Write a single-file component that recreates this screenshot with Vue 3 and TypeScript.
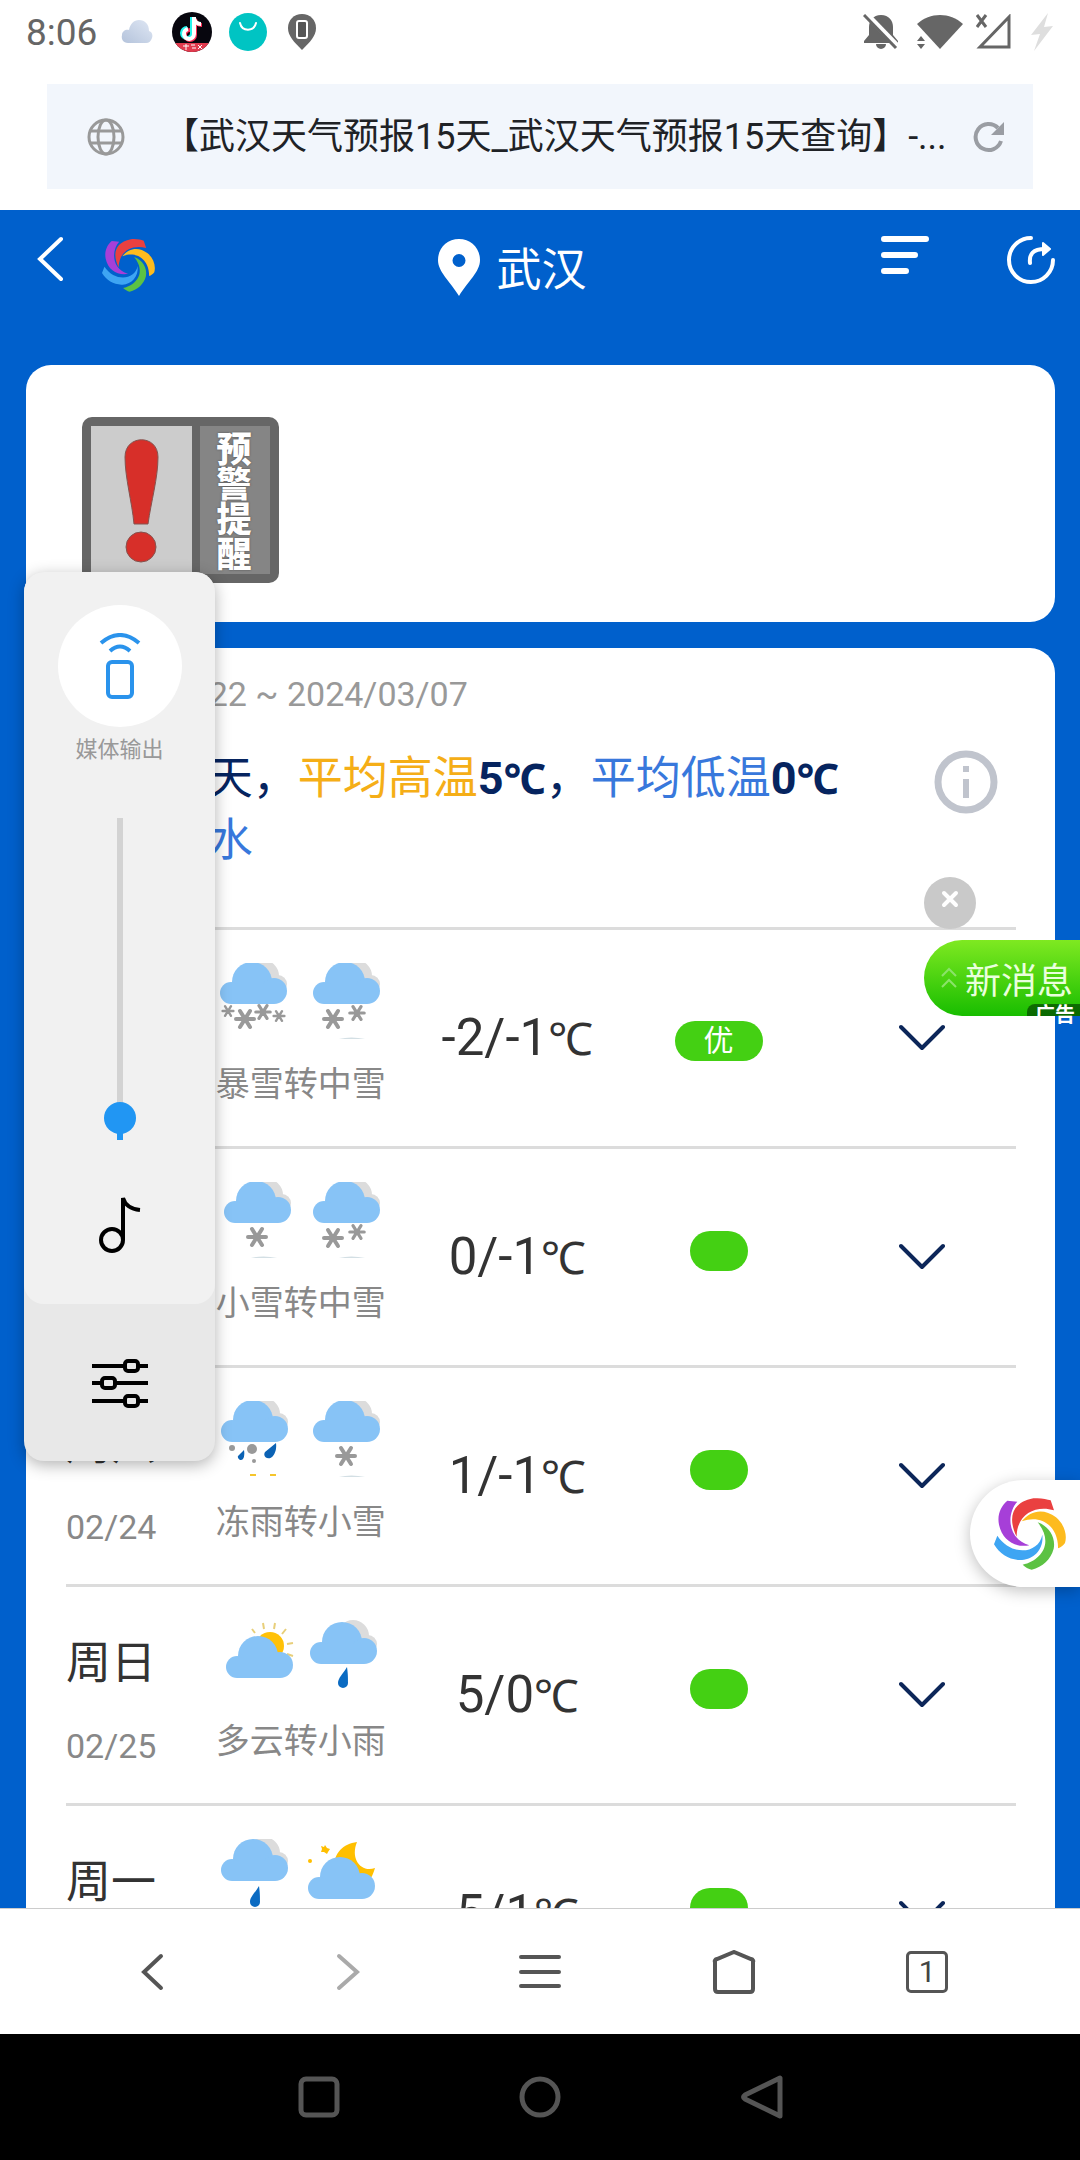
<script setup lang="ts">
import { ref } from 'vue'

type Snow = [x: number, y: number, size: number]

interface WeatherIcon {
  kind: 'snow' | 'sleet' | 'rain' | 'cloudySun' | 'cloudyMoon'
  x: number
  y: number
  snow?: Snow[]
}

interface Day {
  week: string
  date: string
  icons: WeatherIcon[]
  text: string
  temp: string
  air: string
}

const lightSnow = (x: number, sx: number): WeatherIcon => ({ kind: 'snow', x, y: -1, snow: [[sx, 55, 10]] })
const midSnow: WeatherIcon = { kind: 'snow', x: 10, y: -1, snow: [[30, 56, 10], [54, 50, 8]] }

const days: Day[] = [
  {
    week: '周四', date: '02/22', text: '暴雪转中雪', temp: '-2/-1', air: '优',
    icons: [
      { kind: 'snow', x: 5, y: -1, snow: [[13, 48, 6], [30, 56, 10], [48, 49, 8], [64, 53, 6]] },
      midSnow,
    ],
  },
  { week: '周五', date: '02/23', text: '小雪转中雪', temp: '0/-1', air: '', icons: [lightSnow(9, 42), midSnow] },
  {
    week: '周六', date: '02/24', text: '冻雨转小雪', temp: '1/-1', air: '',
    icons: [{ kind: 'sleet', x: 6, y: -1 }, lightSnow(10, 43)],
  },
  {
    week: '周日', date: '02/25', text: '多云转小雨', temp: '5/0', air: '',
    icons: [{ kind: 'cloudySun', x: 11, y: 16 }, { kind: 'rain', x: 7, y: 2 }],
  },
  {
    week: '周一', date: '02/26', text: '小雨转多云', temp: '5/1', air: '',
    icons: [{ kind: 'rain', x: 6, y: 0 }, { kind: 'cloudyMoon', x: 5, y: 18 }],
  },
]

const volume = ref(2)
const address = ref('【武汉天气预报15天_武汉天气预报15天查询】-...')
</script>

<template>
  <div class="screen">
    <svg class="defs" width="0" height="0" aria-hidden="true">
      <symbol id="swirl" viewBox="0 0 216 216">
        <path fill="#a63fd8" d="M40 8L70 11C38 45 38 122 106 142C66 150 25 128 15 80C9 52 20 24 40 8Z" />
        <path fill="#ea4040" d="M68 116C42 64 50 14 118 1C140 -1 158 3 170 7L180 37C126 20 68 48 68 116Z" />
        <path fill="#fdbb1e" d="M83 70C110 36 150 30 186 58C212 80 220 112 213 135C208 142 200 148 192 151C194 92 148 46 83 70Z" />
        <path fill="#5cc243" d="M131 73C164 84 186 118 179 152C170 185 146 206 113 215C103 213 94 207 86 200C140 188 182 136 131 73Z" />
        <path fill="#3ea5f3" d="M10 113L0 139C18 170 50 188 84 186C120 184 150 154 145 110C134 168 52 176 10 113Z" />
      </symbol>
      <symbol id="cloud" viewBox="0 0 67 46" overflow="visible">
        <g fill="#dcdcdc">
          <circle cx="43" cy="14" r="16" />
          <circle cx="58" cy="22" r="9" />
        </g>
      </symbol>
      <symbol id="cloud-front" viewBox="0 0 67 46" overflow="visible">
        <g fill="#87c3f6">
          <circle cx="32" cy="20" r="20" />
          <circle cx="11" cy="31" r="11" />
          <circle cx="54" cy="29" r="13" />
          <rect x="11" y="22" width="43" height="20" />
        </g>
      </symbol>
      <symbol id="flake" viewBox="-10 -10 20 20" overflow="visible">
        <path d="M-9 0H9M-5 -8L5 8M5 -8L-5 8" fill="none" stroke="#999" stroke-width="4" stroke-linecap="round" />
      </symbol>
    </svg>

    <header class="status">
      <time>8:06</time>
      <svg class="s-cloud" viewBox="0 0 32 24" width="32" height="24">
        <defs>
          <linearGradient id="cloudTone" x1="1" y1="0" x2="0" y2="1">
            <stop offset="0" stop-color="#dfe7f4" />
            <stop offset="1" stop-color="#b4c3db" />
          </linearGradient>
        </defs>
        <path fill="url(#cloudTone)" d="M7 23C2 23 0 19 1 15C1 11 5 9 8 10C9 4 13 0 18 0C24 0 28 4 28 11C31 12 32 15 31 18C30 21 28 23 25 23Z" />
      </svg>
      <svg viewBox="0 0 40 40" width="40" height="40">
        <defs><clipPath id="round"><circle cx="20" cy="20" r="20" /></clipPath></defs>
        <g clip-path="url(#round)">
          <rect width="40" height="40" fill="#07060e" />
          <rect y="31" width="40" height="9" fill="#e23a4e" />
          <g fill="none" stroke-width="4">
            <path stroke="#25f4ee" d="M20 5V21A5 5 0 1 1 15 16M20 6Q22 12 28 12" />
            <path stroke="#fe2c55" d="M23 7V23A5 5 0 1 1 18 18M23 7Q24 13 30 13" />
            <path stroke="#fff" d="M22 5V22A5 5 0 1 1 16 17M22 6Q23 12 29 12" />
          </g>
          <path d="M11 34H17M14 32V38M19 33H23M20 36H24M26 33L30 37M30 33L26 37" stroke="#fff" stroke-width="1" />
        </g>
      </svg>
      <svg viewBox="0 0 40 40" width="40" height="40">
        <circle cx="20" cy="20" r="19" fill="#00c4c3" />
        <path d="M12 11C14 20 26 20 28 11" fill="none" stroke="#fff" stroke-width="2" stroke-linecap="round" />
      </svg>
      <svg viewBox="0 0 28 36" width="28" height="36">
        <path fill="#666" d="M14 0C6 0 0 6 0 14C0 22 6 28 14 36C22 28 28 22 28 14C28 6 22 0 14 0Z" />
        <rect x="9" y="7" width="10" height="17" rx="2" fill="#555" stroke="#fff" stroke-width="2" />
      </svg>
      <div class="status-right">
        <svg viewBox="0 0 36 36" width="36" height="36">
          <path fill="#666" d="M18 1C10 1 6 7 6 13V21L1 27V29H35V27L30 21V13C30 7 26 1 18 1ZM13 30H23A5 5 0 0 1 13 30Z" />
          <path d="M3 0L35 33" stroke="#fff" stroke-width="6" />
          <path d="M1 1L33 34" stroke="#666" stroke-width="3" />
        </svg>
        <div class="signals">
          <svg viewBox="0 0 46 36" width="46" height="36">
            <path fill="#666" d="M23 35L0 10C13 -2 33 -2 46 10Z" />
            <path fill="#fff" d="M0 20H7L15 36H0Z" />
            <path fill="#666" d="M0 27L4 22L8 27ZM0 30H8L4 35Z" />
          </svg>
          <svg viewBox="0 0 36 36" width="36" height="36">
            <path d="M33 3V33H4Z" fill="none" stroke="#666" stroke-width="3" />
            <path d="M1 1L10 13M10 1L1 13" stroke="#666" stroke-width="3" />
          </svg>
        </div>
        <svg viewBox="0 0 24 38" width="24" height="38">
          <path d="M18 0L1 22L10 21L4 38L23 13L14 14Z" fill="#dedede" />
        </svg>
      </div>
    </header>

    <form class="address" @submit.prevent>
      <svg viewBox="0 0 38 38" width="38" height="38" fill="none" stroke="#999" stroke-width="3">
        <circle cx="19" cy="19" r="17" />
        <ellipse cx="19" cy="19" rx="8" ry="17" />
        <path d="M3 13H35M3 25H35" />
      </svg>
      <input v-model="address" type="text" aria-label="网址" readonly />
      <button type="submit" aria-label="刷新">
        <svg viewBox="0 0 32 32" width="32" height="32">
          <path d="M28 20A13 13 0 1 1 25 7" fill="none" stroke="#9a9da3" stroke-width="4" />
          <path d="M31 1V14H18Z" fill="#9a9da3" />
        </svg>
      </button>
    </form>

    <main class="page">
      <div class="bar">
        <div class="bar-left">
          <button type="button" aria-label="返回">
            <svg viewBox="0 0 28 46" width="28" height="46">
              <path d="M25 3L4 23L25 43" fill="none" stroke="#fff" stroke-width="4" stroke-linecap="round" />
            </svg>
          </button>
          <a href="#" aria-label="首页"><svg width="53" height="53"><use href="#swirl" /></svg></a>
        </div>
        <h1>
          <svg viewBox="0 0 42 57" width="42" height="57">
            <path fill="#fff" fill-rule="evenodd" d="M21 0C9 0 0 9 0 21C0 33 12 42 21 57C30 42 42 33 42 21C42 9 33 0 21 0ZM21 15A6 6 0 1 1 21 28A6 6 0 1 1 21 15Z" />
          </svg>
          <span>武汉</span>
        </h1>
        <div class="bar-right">
          <button type="button" aria-label="菜单">
            <svg viewBox="0 0 48 48" width="48" height="48">
              <path d="M3 3H45M3 19H34M3 35H25" stroke="#fff" stroke-width="6" stroke-linecap="round" />
            </svg>
          </button>
          <button type="button" aria-label="分享">
            <svg viewBox="0 0 48 48" width="48" height="48">
              <g fill="none" stroke="#fff" stroke-width="4" stroke-linecap="round">
                <path d="M24 2A22 22 0 1 0 46 24" />
                <path d="M23 27C22 18 26 13 38 13" />
              </g>
              <path d="M36 7L43 13L36 19Z" fill="#fff" stroke="#fff" stroke-width="2" stroke-linejoin="round" />
            </svg>
          </button>
        </div>
      </div>

      <section class="card alert">
        <div class="sign">
          <svg viewBox="0 0 101 148" width="101" height="148">
            <rect width="101" height="148" fill="#ccc" />
            <g fill="#d72f29" stroke="#85534f" stroke-width="1">
              <path d="M34 31C34 8 67 8 67 31C67 52 60 76 57 98H43C41 76 34 52 34 31Z" />
              <circle cx="50" cy="121" r="15" />
            </g>
          </svg>
          <strong>预警提醒</strong>
        </div>
      </section>

      <section class="card forecast">
        <p class="range">2024/02/22 ~ 2024/03/07</p>
        <div class="summary">
          <p>
            未来<b>15</b>天，<span class="high">平均高温</span><b>5<i class="unit">℃</i></b>，<span class="low">平均低温</span><b>0<i class="unit">℃</i></b><br />
            <b>10</b><span class="low">天降水</span>
          </p>
          <button type="button" aria-label="说明">
            <svg viewBox="0 0 64 64" width="64" height="64">
              <circle cx="32" cy="32" r="28" fill="none" stroke="#c0c4cd" stroke-width="7" />
              <path d="M32 16V22M32 29V48" stroke="#c0c4cd" stroke-width="6" />
            </svg>
          </button>
        </div>

        <table>
          <colgroup>
            <col class="c-date" /><col class="c-weather" /><col class="c-temp" /><col class="c-air" /><col />
          </colgroup>
          <tbody>
            <tr v-for="day in days" :key="day.date">
              <th scope="row">
                <span class="week">{{ day.week }}</span>
                <span class="date">{{ day.date }}</span>
              </th>
              <td class="weather">
                <div class="icons">
                  <svg v-for="(icon, i) in day.icons" :key="i" viewBox="0 0 80 76" width="80" height="76">
                    <use v-if="icon.kind !== 'cloudySun' && icon.kind !== 'cloudyMoon'" href="#cloud" :x="icon.x" :y="icon.y" width="67" height="46" />
                    <g v-if="icon.kind === 'cloudySun'">
                      <circle cx="55" cy="26" r="14" fill="#ffc107" />
                      <path d="M40 13L37 9M49 9L48 3M59 9L60 3M67 14L71 9M72 24L78 23M72 34L78 36" stroke="#e8cf7a" stroke-width="2" />
                    </g>
                    <g v-if="icon.kind === 'cloudyMoon'" fill="#ffbf00">
                      <path d="M54 3C40 5 31 14 31 28L62 46C67 42 70 36 72 29C58 34 47 20 54 3Z" />
                      <path d="M22 6L24 9L27 10L25 13L24 15L21 13L18 13L19 10L18 7L21 8Z" />
                      <circle cx="7" cy="22" r="2" />
                    </g>
                    <use href="#cloud-front" :x="icon.x" :y="icon.y" width="67" height="46" />
                    <use v-for="f in icon.snow" :key="f[0]" href="#flake" :x="f[0] - f[2]" :y="f[1] - f[2]" :width="f[2] * 2" :height="f[2] * 2" />
                    <path v-if="icon.snow && icon.snow.length < 4" d="M36 77Q48 74 62 77" fill="none" stroke="#d3dfe4" stroke-width="2" />
                    <path v-if="icon.kind === 'rain'" d="M44 47C40 54 35 58 35 63A5 5 0 0 0 45 63C45 58 45 54 44 47Z" fill="#0b6bc2" />
                    <g v-if="icon.kind === 'sleet'">
                      <g fill="#999">
                        <circle cx="17" cy="47" r="3" />
                        <circle cx="37" cy="48" r="5" />
                        <circle cx="39" cy="60" r="2" />
                      </g>
                      <path d="M29 49L23 55A3 3 0 0 0 28 58Q30 55 29 49ZM61 42L50 51C47 56 54 60 58 55Q62 50 61 42Z" fill="#0b62b4" />
                      <path d="M35 74H41M55 74H61" stroke="#f5c52c" stroke-width="2" />
                    </g>
                  </svg>
                </div>
                <span class="desc">{{ day.text }}</span>
              </td>
              <td class="temp">{{ day.temp }}<i class="unit">℃</i></td>
              <td class="air"><span>{{ day.air }}</span></td>
              <td class="more">
                <button type="button" :aria-label="day.week + '详情'">
                  <svg viewBox="0 0 46 28" width="46" height="28">
                    <path d="M2 3L23 24L44 3" fill="none" stroke="#0c2659" stroke-width="4" stroke-linecap="round" stroke-linejoin="round" />
                  </svg>
                </button>
              </td>
            </tr>
          </tbody>
        </table>
      </section>
    </main>

    <nav class="tools">
      <button type="button" aria-label="后退">
        <svg viewBox="0 0 44 44" width="44" height="44" class="line"><path d="M30 6L13 22L30 38" /></svg>
      </button>
      <button type="button" aria-label="前进">
        <svg viewBox="0 0 44 44" width="44" height="44" class="line pale"><path d="M15 6L33 22L15 38" /></svg>
      </button>
      <button type="button" aria-label="菜单">
        <svg viewBox="0 0 44 44" width="44" height="44" class="line"><path d="M3 7H41M3 22H41M3 36H41" /></svg>
      </button>
      <button type="button" aria-label="主页">
        <svg viewBox="0 0 44 44" width="44" height="44" class="line"><path d="M3 12Q2 10 5 9L22 2L39 9Q42 10 41 12V39Q41 42 38 42H6Q3 42 3 39Z" /></svg>
      </button>
      <button type="button" class="tabs" aria-label="标签页"><span>1</span></button>
    </nav>

    <nav class="system">
      <button type="button" aria-label="最近">
        <svg viewBox="0 0 44 44" width="44" height="44"><rect x="4" y="4" width="36" height="36" rx="5" /></svg>
      </button>
      <button type="button" aria-label="桌面">
        <svg viewBox="0 0 44 44" width="44" height="44"><circle cx="22" cy="22" r="18" /></svg>
      </button>
      <button type="button" aria-label="返回上级">
        <svg viewBox="0 0 44 44" width="44" height="44"><path d="M41 3V41L6 24Q3 22 6 20Z" /></svg>
      </button>
    </nav>

    <aside class="volume">
      <div class="volume-main">
        <button type="button" class="output">
          <span class="disc">
            <svg viewBox="0 0 42 66" width="42" height="66" fill="none" stroke="#2a93ec" stroke-width="4">
              <path d="M2 10Q21 -6 40 10M11 18Q21 9 31 18" />
              <rect x="9" y="29" width="24" height="35" rx="4" />
            </svg>
          </span>
          媒体输出
        </button>
        <input v-model.number="volume" type="range" min="0" max="100" aria-label="媒体音量" />
        <svg class="note" viewBox="0 0 42 58" width="42" height="58" fill="none" stroke="#000" stroke-width="4">
          <circle cx="13" cy="44" r="11" />
          <path d="M24 44V2C26 9 31 13 41 14" />
        </svg>
      </div>
      <button type="button" class="tune" aria-label="声音设置">
        <svg viewBox="0 0 56 50" width="56" height="50" fill="none" stroke="#000" stroke-width="4">
          <path d="M0 8H32M47 8H56M0 25H9M25 25H56M0 43H32M47 43H56" />
          <rect x="33" y="3" width="13" height="10" rx="3" />
          <rect x="10" y="20" width="13" height="10" rx="3" />
          <rect x="33" y="38" width="13" height="10" rx="3" />
        </svg>
      </button>
    </aside>

    <button type="button" class="close" aria-label="关闭广告">
      <svg viewBox="0 0 20 20" width="20" height="20"><path d="M4 4L16 16M16 4L4 16" stroke="#fff" stroke-width="4" stroke-linecap="round" /></svg>
    </button>
    <a href="#" class="message">
      <svg viewBox="0 0 16 22" width="16" height="22" fill="none" stroke="#8be36a" stroke-width="2">
        <path d="M1 9L8 2L15 9M1 20L8 13L15 20" />
      </svg>
      新消息
      <small>广告</small>
    </a>
    <a href="#" class="float-logo" aria-label="快捷入口"><svg width="72" height="72"><use href="#swirl" /></svg></a>
  </div>
</template>

<style>
body {
  margin: 0;
}
</style>

<style scoped>
.screen {
  position: relative;
  display: flex;
  flex-direction: column;
  height: 100vh;
  overflow: hidden;
  background: #fff;
  color: #333;
  font-family: Roboto, "Noto Sans CJK SC", sans-serif;
}

svg {
  display: block;
  flex: none;
}

.defs {
  position: absolute;
}

button {
  padding: 0;
  border: 0;
  background: none;
  color: inherit;
  font: inherit;
}

a {
  color: inherit;
  text-decoration: none;
}

p,
h1 {
  margin: 0;
}

.status {
  display: flex;
  align-items: center;
  gap: 16px;
  height: 64px;
  padding: 0 26px;
  box-sizing: border-box;
}

.status time {
  color: #666;
  font-size: 37px;
}

.s-cloud {
  margin: 0 3px 0 8px;
}

.status svg:nth-of-type(4) {
  margin-left: 4px;
}

.status-right {
  display: flex;
  align-items: center;
  gap: 18px;
  margin-left: auto;
}

.signals {
  display: flex;
  gap: 13px;
}

.address {
  display: flex;
  align-items: center;
  height: 105px;
  margin: 20px 47px 21px;
  padding: 0 28px 0 40px;
  box-sizing: border-box;
  background: #f2f6fc;
}

.address input {
  flex: 1;
  min-width: 0;
  margin: 0 24px 0 38px;
  padding: 0;
  border: 0;
  background: none;
  color: #202226;
  font: 36px/52px Roboto, "Noto Sans CJK SC", sans-serif;
}

.page {
  flex: 1;
  min-height: 0;
  overflow: hidden;
  padding: 0 25px 0 26px;
  background: #0060cc;
}

.bar {
  display: grid;
  grid-template-columns: 6fr auto 7fr;
  align-items: start;
  height: 155px;
  padding: 26px 0 0 10px;
  box-sizing: border-box;
}

.bar-left {
  display: flex;
  align-items: flex-start;
  gap: 38px;
}

.bar-left a {
  padding-top: 3px;
}

.bar h1 {
  display: flex;
  align-items: flex-start;
  gap: 17px;
  padding-top: 3px;
  color: #fff;
  font-size: 45px;
  font-weight: 400;
  line-height: 57px;
}

.bar h1 span {
  padding-top: 3px;
}

.bar-right {
  display: flex;
  justify-content: flex-end;
  gap: 78px;
}

.card {
  border-radius: 25px;
  background: #fff;
}

.alert {
  height: 257px;
  margin-bottom: 26px;
  padding: 52px 56px;
  box-sizing: border-box;
}

.sign {
  display: flex;
  gap: 8px;
  width: max-content;
  padding: 9px;
  border-radius: 10px;
  background: #666;
}

.sign strong {
  width: 36px;
  padding: 7px 18px 1px 16px;
  background: #858585;
  color: #fff;
  font-size: 35px;
  font-weight: 900;
  line-height: 35px;
  text-align: center;
  text-shadow: 0 0 2px #444;
  word-break: break-all;
}

.forecast {
  padding: 26px 39px 0 40px;
}

.range {
  color: #999;
  font-size: 34px;
  line-height: 40px;
}

.summary {
  display: flex;
  justify-content: space-between;
  align-items: flex-start;
  height: 213px;
  padding: 32px 18px 0 0;
  box-sizing: border-box;
}

.summary p {
  padding-top: 1px;
  color: #06245f;
  font-size: 45px;
  line-height: 62px;
}

.summary button {
  margin-top: 4px;
}

.summary b {
  font-weight: 700;
}

.unit {
  font-family: "Noto Sans", "Noto Sans CJK SC", sans-serif;
  font-style: normal;
}

.summary .unit {
  font-size: 42px;
}

.high {
  color: #f5ae17;
}

.low {
  color: #3878dc;
}

table {
  width: 100%;
  border-collapse: collapse;
  table-layout: fixed;
}

.c-date {
  width: 14%;
}

.c-weather {
  width: 21%;
}

.c-temp {
  width: 25%;
}

.c-air {
  width: 18%;
}

tr {
  height: 219px;
  border-top: 3px solid #dcdcdc;
}

th,
td {
  padding: 0;
  font-weight: 400;
  text-align: center;
  vertical-align: top;
}

th {
  text-align: left;
}

.week {
  display: block;
  padding-top: 47px;
  font-size: 45px;
  line-height: 60px;
}

.date {
  display: block;
  padding-top: 32px;
  color: #888;
  font-size: 34px;
  line-height: 40px;
}

.icons {
  display: flex;
  justify-content: center;
  gap: 8px;
  padding-top: 33px;
}

.desc {
  display: block;
  padding: 20px 0 0 4px;
  color: #888;
  font-size: 34px;
  line-height: 50px;
  white-space: nowrap;
}

.temp {
  padding-top: 78px;
  font-size: 51px;
  line-height: 60px;
}

.temp .unit {
  font-size: 45px;
}

.air {
  padding: 82px 6px 0 0;
  font-size: 30px;
  line-height: 58px;
}

.air span {
  display: inline-block;
  min-height: 40px;
  padding: 0 29px;
  border-radius: 20px;
  background: #44d013;
  color: #fff;
  line-height: 40px;
}

.more {
  padding: 94px 0 0 20px;
}

.more svg {
  margin: 0 auto;
}

.tools {
  display: flex;
  flex: none;
  height: 126px;
  padding: 0 56px;
  border-top: 1px solid #ccc;
  box-sizing: border-box;
}

.tools button,
.system button {
  display: flex;
  flex: 1;
  align-items: center;
  justify-content: center;
}

.line {
  fill: none;
  stroke: #555;
  stroke-width: 4;
  stroke-linecap: round;
}

.pale {
  stroke: #aaa;
}

.tabs span {
  width: 36px;
  border: 3px solid #555;
  border-radius: 5px;
  color: #444;
  font-size: 30px;
  line-height: 36px;
}

.system {
  display: flex;
  flex: none;
  height: 126px;
  padding: 0 208px;
  background: #000;
}

.system svg {
  fill: none;
  stroke: #555;
  stroke-width: 5;
  stroke-linejoin: round;
}

.volume {
  position: absolute;
  top: 572px;
  left: 24px;
  width: 191px;
  border-radius: 20px;
  background: #e8e8e8;
  box-shadow: 0 4px 16px rgb(0 0 0 / 30%);
}

.volume-main {
  display: flex;
  flex-direction: column;
  align-items: center;
  height: 732px;
  padding-top: 33px;
  border-radius: 20px;
  box-sizing: border-box;
  background: #f1f1f1;
}

.output {
  color: #999;
  font-size: 22px;
  line-height: 46px;
}

.disc {
  display: flex;
  align-items: center;
  justify-content: center;
  width: 124px;
  height: 122px;
  border-radius: 50%;
  background: #fff;
}

.volume input {
  width: 32px;
  height: 322px;
  margin: 45px 0 56px;
  appearance: none;
  background: linear-gradient(to top, #2196f3 22px, #d3d3d3 22px) center / 6px 100% no-repeat;
  direction: rtl;
  writing-mode: vertical-lr;
}

.volume input::-webkit-slider-thumb {
  width: 32px;
  height: 32px;
  border-radius: 50%;
  appearance: none;
  background: #2196f3;
}

.tune {
  display: flex;
  align-items: center;
  justify-content: center;
  width: 100%;
  height: 157px;
}

.close {
  position: absolute;
  top: 877px;
  right: 104px;
  width: 52px;
  height: 52px;
  padding-bottom: 8px;
  border-radius: 50%;
  background: #c9c9c9;
}

.close svg {
  margin: 0 auto;
}

.message {
  position: absolute;
  top: 940px;
  right: 0;
  display: flex;
  align-items: center;
  gap: 8px;
  width: 156px;
  height: 76px;
  padding-left: 17px;
  border-radius: 38px 0 0 38px;
  box-sizing: border-box;
  background: linear-gradient(#7fe921, #18bd00);
  color: #e9ffdd;
  font-size: 36px;
  white-space: nowrap;
}

.message small {
  position: absolute;
  right: 0;
  bottom: -10px;
  padding: 0 5px 0 8px;
  border-radius: 8px 0 0;
  background: linear-gradient(rgb(0 60 0 / 65%) 55%, transparent 55%);
  color: #fff;
  font-size: 20px;
  font-weight: 700;
  line-height: 22px;
}

.float-logo {
  position: absolute;
  top: 1480px;
  right: 0;
  padding: 18px 14px 17px 24px;
  border-radius: 54px 0 0 54px;
  background: #fff;
  box-shadow: 0 4px 16px rgb(0 0 0 / 25%);
}
</style>
